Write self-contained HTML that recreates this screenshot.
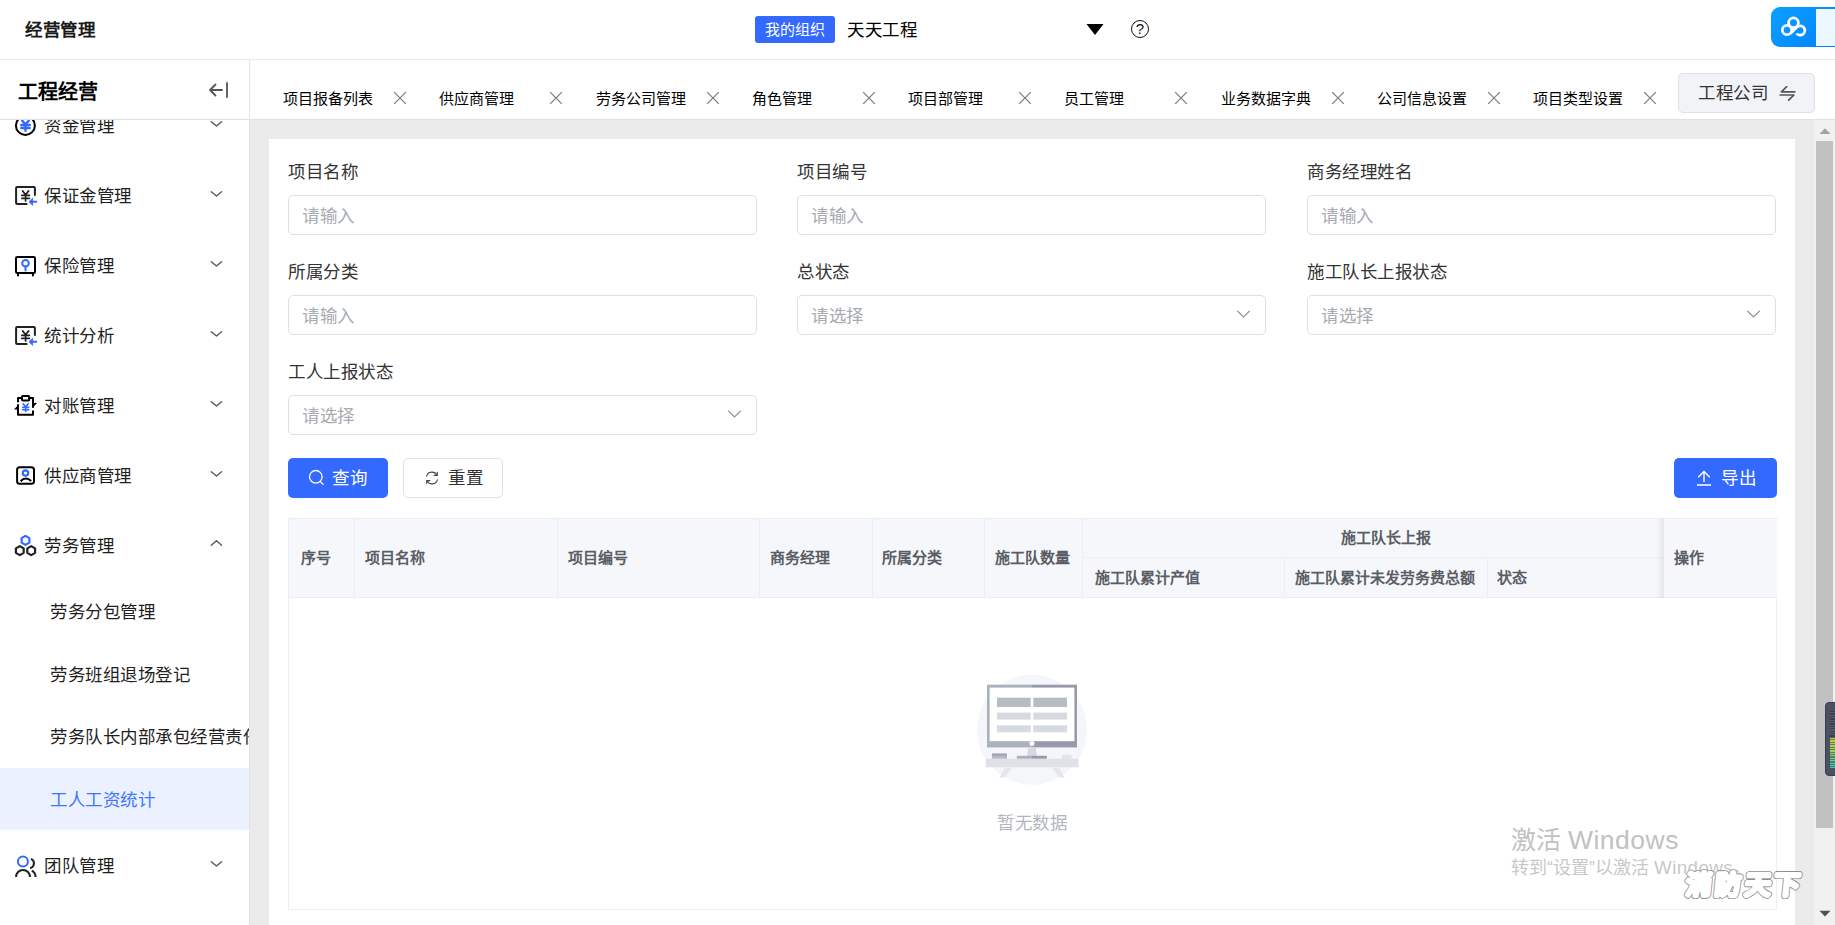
<!DOCTYPE html>
<html lang="zh-CN">
<head>
<meta charset="utf-8">
<title>工人工资统计</title>
<style>
*{box-sizing:border-box;margin:0;padding:0}
html,body{width:1835px;height:925px;overflow:hidden;background:#fff}
body{font-family:"Liberation Sans",sans-serif;color:#1f1f1f;position:relative;font-size:17.5px;letter-spacing:0.5px}
.tab,.hc,.badge,#side .head .t{letter-spacing:0}
.abs{position:absolute}
/* header */
#hdr{position:absolute;left:0;top:0;width:1835px;height:60px;background:#fff;border-bottom:1px solid #ebebeb}
#hdr .title{position:absolute;left:25px;top:17px;font-size:17.5px;line-height:26px;font-weight:700;color:#1a1a1a}
#hdr .badge{letter-spacing:0;position:absolute;left:755px;top:16px;width:80px;height:27px;background:#3369ff;border-radius:3px;color:#fff;font-size:15px;line-height:27px;text-align:center}
#hdr .org{position:absolute;left:847px;top:17px;font-size:17.5px;line-height:26px;color:#000}
/* sidebar */
#side{position:absolute;left:0;top:60px;width:250px;height:865px;background:#fff;border-right:1px solid #e3e4ea;overflow:hidden}
#side .head{position:absolute;left:0;top:0;width:249px;height:60px;background:#fff;border-bottom:1px solid #dfe1e8;z-index:2}
#side .head .t{position:absolute;left:18px;top:17px;font-size:20px;line-height:30px;font-weight:700;color:#000}
.mi{position:absolute;left:0;width:249px;height:70px}
.mi .tx{position:absolute;left:44px;top:23px;line-height:26px;font-size:17.5px;color:#1f1f1f}
.mi svg.ic{position:absolute;left:12px;top:21px;width:28px;height:28px}
#side .head svg.col{position:absolute;left:208px;top:21px;width:22px;height:18px}
.mi svg.ch{position:absolute;left:209px;top:27px;width:14px;height:14px}
.si{position:absolute;left:0;width:249px;height:62.5px}
.si .tx{position:absolute;left:50px;top:19px;line-height:26px;font-size:17.5px;color:#1f1f1f;white-space:nowrap}
.si.on{background:#ecf1ff}
.si.on .tx{color:#3f74ff}
/* tabs */
#tabs{position:absolute;left:250px;top:60px;width:1585px;height:60px;background:#fff;border-bottom:1px solid #dfe1e8}
.tab{position:absolute;top:28px;font-size:15px;line-height:22px;color:#000;white-space:nowrap}
.tx-x{position:absolute;top:31px;width:14px;height:14px}
#corp{position:absolute;left:1428px;top:13px;width:137px;height:40px;background:#f2f3f7;border:1px solid #dfe1e8;border-radius:5px}
#corp .t{position:absolute;left:19px;top:6px;font-size:17.5px;line-height:26px;color:#333}
/* content */
#main{position:absolute;left:250px;top:120px;width:1564px;height:805px;background:#ebebeb}
#card{position:absolute;left:19px;top:19px;width:1526px;height:790px;background:#fff}
.lb{position:absolute;font-size:17.5px;line-height:26px;color:#333;white-space:nowrap}
.inp{position:absolute;width:469px;height:40px;border:1px solid #dcdfe6;border-radius:5px;background:#fff}
.inp .ph{position:absolute;left:13px;top:7px;font-size:17.5px;line-height:26px;color:#a8abb2}
.inp svg{position:absolute;right:14px;top:13px;width:14px;height:14px}
.btn{position:absolute;height:40px;border-radius:5px;font-size:17.5px;line-height:38px;white-space:nowrap}
.btn.p{background:#3369ff;color:#fff}
.btn.d{background:#fff;border:1px solid #dcdfe6;color:#333}
/* table */
#tbl{position:absolute;left:19px;top:379px;width:1489px;height:392px;border:1px solid #ebeef5;background:#fff}
#th{position:absolute;left:0;top:0;width:1487px;height:79px;background:#f5f7fa;border-bottom:1px solid #ebeef5}
.vl{position:absolute;width:1px;background:#ebeef5}
.hl{position:absolute;height:1px;background:#ebeef5}
.hc{position:absolute;font-size:15px;line-height:22px;font-weight:700;color:#595d66;white-space:nowrap}
/* scrollbar */
#sb{position:absolute;left:1814px;top:120px;width:21px;height:805px;background:#f1f1f1}
#sb .thumb{position:absolute;left:2px;top:21px;width:17px;height:687px;background:#c1c1c1}
</style>
</head>
<body>
<div id="hdr">
  <div class="title">经营管理</div>
  <div class="badge">我的组织</div>
  <div class="org">天天工程</div>
  <svg style="position:absolute;left:1085px;top:22px;width:20px;height:15px" viewBox="0 0 20 15"><path d="M1.5 2 H18.5 L10 13 Z" fill="#000"/></svg>
  <div style="position:absolute;left:1131px;top:20.2px;width:18px;height:18px;border:1.3px solid #111;border-radius:50%;font-size:15px;line-height:15px;letter-spacing:0;text-align:center;color:#111">?</div>
  <div style="position:absolute;left:1771px;top:7px;width:70px;height:40px;border-radius:9px 0 0 9px;background:linear-gradient(135deg,#0aa0ff,#0080ff)">
    <div style="position:absolute;left:45px;top:1.5px;width:25px;height:37px;background:#edf7ff"></div>
    <svg style="position:absolute;left:6px;top:6px;width:34px;height:28px" viewBox="0 0 34 28"><g fill="none" stroke="#fff" stroke-width="2.7"><circle cx="16.5" cy="9.8" r="4.9"/><circle cx="10" cy="17" r="4.7"/><path d="M13.5 20.5 L20 14 A4.7 4.7 0 1 1 19.5 20.5"/></g></svg>
  </div>
</div>
<div id="side">
  <div class="head"><div class="t">工程经营</div><svg class="col" viewBox="0 0 22 18"><path d="M2 9 H14 M7.5 3.5 L2 9 L7.5 14.5 M19 2 V16" fill="none" stroke="#555" stroke-width="1.8" stroke-linecap="round" stroke-linejoin="round"/></svg></div>
  <div class="mi" style="top:30px"><svg class="ic" viewBox="0 0 28 28"><circle cx="13.4" cy="14.4" r="9.5" fill="none" stroke="#000" stroke-width="2"/><path d="M10.100000000000001 9.4 L13.5 13.420000000000002 L16.9 9.4 M13.5 13.420000000000002 V19.8 M9.3 13.97 H17.7 M9.3 17.05 H17.7" fill="none" stroke="#3369ff" stroke-width="2.4" stroke-linecap="round" stroke-linejoin="round"/></svg><div class="tx">资金管理</div><svg class="ch" viewBox="0 0 14 14"><path d="M2.3 4.7 L7.45 9.1 L12.6 4.7" fill="none" stroke="#555" stroke-width="1.3" stroke-linecap="round" stroke-linejoin="round"/></svg></div>
  <div class="mi" style="top:100px"><svg class="ic" viewBox="0 0 28 28"><path d="M22.9 14 V7 Q22.9 6 21.9 6 H5.1 Q4.1 6 4.1 7 V22 Q4.1 23 5.1 23 H14.6" fill="none" stroke="#1f2125" stroke-width="2" stroke-linecap="round"/><path d="M10.6 9.9 L13.6 13.7 L16.6 9.9 M13.6 13.7 V20 M9.8 14.3 H17.4 M9.8 17.3 H17.4" fill="none" stroke="#1f2125" stroke-width="1.7" stroke-linecap="round" stroke-linejoin="round"/><path d="M17 20.75 L20.6 17.2 V24.3 Z" fill="#3369ff" stroke="#3369ff" stroke-width="0.8" stroke-linejoin="round"/><path d="M20 20.75 H24.3" stroke="#3369ff" stroke-width="2" stroke-linecap="round"/></svg><div class="tx">保证金管理</div><svg class="ch" viewBox="0 0 14 14"><path d="M2.3 4.7 L7.45 9.1 L12.6 4.7" fill="none" stroke="#555" stroke-width="1.3" stroke-linecap="round" stroke-linejoin="round"/></svg></div>
  <div class="mi" style="top:170px"><svg class="ic" viewBox="0 0 28 28"><rect x="4" y="6" width="19" height="16" rx="1.2" fill="none" stroke="#000" stroke-width="2"/><path d="M6 22 V24.6 M20.9 22 V24.6" stroke="#000" stroke-width="2" stroke-linecap="round"/><circle cx="13.5" cy="12.3" r="3.3" fill="none" stroke="#3369ff" stroke-width="2"/><path d="M13.5 15.6 V19.6" stroke="#3369ff" stroke-width="2" stroke-linecap="round"/></svg><div class="tx">保险管理</div><svg class="ch" viewBox="0 0 14 14"><path d="M2.3 4.7 L7.45 9.1 L12.6 4.7" fill="none" stroke="#555" stroke-width="1.3" stroke-linecap="round" stroke-linejoin="round"/></svg></div>
  <div class="mi" style="top:240px"><svg class="ic" viewBox="0 0 28 28"><path d="M22.9 14 V7 Q22.9 6 21.9 6 H5.1 Q4.1 6 4.1 7 V22 Q4.1 23 5.1 23 H14.6" fill="none" stroke="#1f2125" stroke-width="2" stroke-linecap="round"/><path d="M10.6 9.9 L13.6 13.7 L16.6 9.9 M13.6 13.7 V20 M9.8 14.3 H17.4 M9.8 17.3 H17.4" fill="none" stroke="#1f2125" stroke-width="1.7" stroke-linecap="round" stroke-linejoin="round"/><path d="M17 20.75 L20.6 17.2 V24.3 Z" fill="#3369ff" stroke="#3369ff" stroke-width="0.8" stroke-linejoin="round"/><path d="M20 20.75 H24.3" stroke="#3369ff" stroke-width="2" stroke-linecap="round"/></svg><div class="tx">统计分析</div><svg class="ch" viewBox="0 0 14 14"><path d="M2.3 4.7 L7.45 9.1 L12.6 4.7" fill="none" stroke="#555" stroke-width="1.3" stroke-linecap="round" stroke-linejoin="round"/></svg></div>
  <div class="mi" style="top:310px"><svg class="ic" viewBox="0 0 28 28"><rect x="10" y="5" width="7.2" height="4.6" rx="0.8" fill="none" stroke="#000" stroke-width="2"/><path d="M10 7 H6 V10.6 M6 14 V23.8 H21 V20.2 M17 7 H21 V16" fill="none" stroke="#000" stroke-width="2" stroke-linecap="round" stroke-linejoin="round"/><path d="M2 18.6 L6.6 13.6 V18.6 Z M25 12 H20.4 V17 Z" fill="#000"/><path d="M11.2 12.8 L13.7 16 L16.2 12.8 M13.7 16 V20.4 M10.6 16.3 H16.8 M10.6 18.6 H16.8" fill="none" stroke="#3369ff" stroke-width="1.6" stroke-linecap="round" stroke-linejoin="round"/></svg><div class="tx">对账管理</div><svg class="ch" viewBox="0 0 14 14"><path d="M2.3 4.7 L7.45 9.1 L12.6 4.7" fill="none" stroke="#555" stroke-width="1.3" stroke-linecap="round" stroke-linejoin="round"/></svg></div>
  <div class="mi" style="top:380px"><svg class="ic" viewBox="0 0 28 28"><rect x="5.1" y="6.2" width="16.9" height="16.6" rx="2.6" fill="none" stroke="#000" stroke-width="2"/><circle cx="13.5" cy="12" r="2.7" fill="none" stroke="#3369ff" stroke-width="2.2"/><path d="M8.6 20.3 Q13.5 15 19.2 19.9" fill="none" stroke="#000" stroke-width="2"/></svg><div class="tx">供应商管理</div><svg class="ch" viewBox="0 0 14 14"><path d="M2.3 4.7 L7.45 9.1 L12.6 4.7" fill="none" stroke="#555" stroke-width="1.3" stroke-linecap="round" stroke-linejoin="round"/></svg></div>
  <div class="mi" style="top:450px"><svg class="ic" viewBox="0 0 28 28"><polygon points="13.50,4.90 17.40,7.15 17.40,11.65 13.50,13.90 9.60,11.65 9.60,7.15" fill="none" stroke="#3369ff" stroke-width="2.2" stroke-linejoin="round"/><polygon points="7.80,15.10 11.70,17.35 11.70,21.85 7.80,24.10 3.90,21.85 3.90,17.35" fill="none" stroke="#1f2125" stroke-width="2.2" stroke-linejoin="round"/><polygon points="19.20,15.10 23.10,17.35 23.10,21.85 19.20,24.10 15.30,21.85 15.30,17.35" fill="none" stroke="#1f2125" stroke-width="2.2" stroke-linejoin="round"/></svg><div class="tx">劳务管理</div><svg class="ch" viewBox="0 0 14 14"><path d="M2.3 8.3 L7.45 3.8 L12.6 8.3" fill="none" stroke="#555" stroke-width="1.3" stroke-linecap="round" stroke-linejoin="round"/></svg></div>
  <div class="mi" style="top:770px"><svg class="ic" viewBox="0 0 28 28"><circle cx="10.9" cy="10.5" r="5" fill="none" stroke="#3369ff" stroke-width="2"/><path d="M4 26 A7 7 0 0 1 18 26 M19 7.8 A5 5 0 0 1 18.2 17.2 M19.8 19.6 A7.5 7.5 0 0 1 23.6 26" fill="none" stroke="#1f2125" stroke-width="2"/></svg><div class="tx">团队管理</div><svg class="ch" viewBox="0 0 14 14"><path d="M2.3 4.7 L7.45 9.1 L12.6 4.7" fill="none" stroke="#555" stroke-width="1.3" stroke-linecap="round" stroke-linejoin="round"/></svg></div>
  <div class="si" style="top:520px"><div class="tx">劳务分包管理</div></div>
  <div class="si" style="top:582.5px"><div class="tx">劳务班组退场登记</div></div>
  <div class="si" style="top:645px"><div class="tx">劳务队长内部承包经营责任制</div></div>
  <div class="si on" style="top:707.5px"><div class="tx">工人工资统计</div></div>
</div>
<div id="tabs">
<div class="tab" style="left:33.0px">项目报备列表</div><svg class="tx-x" style="left:143.0px" viewBox="0 0 14 14"><path d="M1.2 1.2 L12.8 12.8 M12.8 1.2 L1.2 12.8" stroke="#7a7a7a" stroke-width="1.2" fill="none"/></svg>
<div class="tab" style="left:189.25px">供应商管理</div><svg class="tx-x" style="left:299.25px" viewBox="0 0 14 14"><path d="M1.2 1.2 L12.8 12.8 M12.8 1.2 L1.2 12.8" stroke="#7a7a7a" stroke-width="1.2" fill="none"/></svg>
<div class="tab" style="left:345.5px">劳务公司管理</div><svg class="tx-x" style="left:455.5px" viewBox="0 0 14 14"><path d="M1.2 1.2 L12.8 12.8 M12.8 1.2 L1.2 12.8" stroke="#7a7a7a" stroke-width="1.2" fill="none"/></svg>
<div class="tab" style="left:501.75px">角色管理</div><svg class="tx-x" style="left:611.75px" viewBox="0 0 14 14"><path d="M1.2 1.2 L12.8 12.8 M12.8 1.2 L1.2 12.8" stroke="#7a7a7a" stroke-width="1.2" fill="none"/></svg>
<div class="tab" style="left:658.0px">项目部管理</div><svg class="tx-x" style="left:768.0px" viewBox="0 0 14 14"><path d="M1.2 1.2 L12.8 12.8 M12.8 1.2 L1.2 12.8" stroke="#7a7a7a" stroke-width="1.2" fill="none"/></svg>
<div class="tab" style="left:814.25px">员工管理</div><svg class="tx-x" style="left:924.25px" viewBox="0 0 14 14"><path d="M1.2 1.2 L12.8 12.8 M12.8 1.2 L1.2 12.8" stroke="#7a7a7a" stroke-width="1.2" fill="none"/></svg>
<div class="tab" style="left:970.5px">业务数据字典</div><svg class="tx-x" style="left:1080.5px" viewBox="0 0 14 14"><path d="M1.2 1.2 L12.8 12.8 M12.8 1.2 L1.2 12.8" stroke="#7a7a7a" stroke-width="1.2" fill="none"/></svg>
<div class="tab" style="left:1126.75px">公司信息设置</div><svg class="tx-x" style="left:1236.75px" viewBox="0 0 14 14"><path d="M1.2 1.2 L12.8 12.8 M12.8 1.2 L1.2 12.8" stroke="#7a7a7a" stroke-width="1.2" fill="none"/></svg>
<div class="tab" style="left:1283.0px">项目类型设置</div><svg class="tx-x" style="left:1393.0px" viewBox="0 0 14 14"><path d="M1.2 1.2 L12.8 12.8 M12.8 1.2 L1.2 12.8" stroke="#7a7a7a" stroke-width="1.2" fill="none"/></svg>
<div id="corp"><div class="t">工程公司</div><svg viewBox="0 0 20 16" style="position:absolute;left:98px;top:12px;width:20px;height:16px"><path d="M9.6 0.7 L4.4 5.8 H17.8 M3.2 9 H16.9 L11.7 14.2" fill="none" stroke="#555" stroke-width="1.7" stroke-linejoin="round" stroke-linecap="round"/></svg></div>
</div>
<div id="main"><div id="card">
<div class="lb" style="left:19px;top:20px">项目名称</div>
<div class="lb" style="left:528px;top:20px">项目编号</div>
<div class="lb" style="left:1038px;top:20px">商务经理姓名</div>
<div class="inp" style="left:19px;top:56px"><div class="ph">请输入</div></div>
<div class="inp" style="left:528px;top:56px"><div class="ph">请输入</div></div>
<div class="inp" style="left:1038px;top:56px"><div class="ph">请输入</div></div>
<div class="lb" style="left:19px;top:120px">所属分类</div>
<div class="lb" style="left:528px;top:120px">总状态</div>
<div class="lb" style="left:1038px;top:120px">施工队长上报状态</div>
<div class="inp" style="left:19px;top:156px"><div class="ph">请输入</div></div>
<div class="inp" style="left:528px;top:156px"><div class="ph">请选择</div><svg viewBox="0 0 14 14"><path d="M0.5 2.1 L6.5 7.9 L12.5 2.1" fill="none" stroke="#8e8e8e" stroke-width="1.3" stroke-linecap="round" stroke-linejoin="round"/></svg></div>
<div class="inp" style="left:1038px;top:156px"><div class="ph">请选择</div><svg viewBox="0 0 14 14"><path d="M0.5 2.1 L6.5 7.9 L12.5 2.1" fill="none" stroke="#8e8e8e" stroke-width="1.3" stroke-linecap="round" stroke-linejoin="round"/></svg></div>
<div class="lb" style="left:19px;top:220px">工人上报状态</div>
<div class="inp" style="left:19px;top:256px"><div class="ph">请选择</div><svg viewBox="0 0 14 14"><path d="M0.5 2.1 L6.5 7.9 L12.5 2.1" fill="none" stroke="#8e8e8e" stroke-width="1.3" stroke-linecap="round" stroke-linejoin="round"/></svg></div>
<div class="btn p" style="left:19px;top:319px;width:100px"><svg style="position:absolute;left:19px;top:10px;width:20px;height:20px" viewBox="0 0 20 20"><circle cx="8.8" cy="8.8" r="6.3" fill="none" stroke="#fff" stroke-width="1.3"/><path d="M13.4 13.6 L16 16.2" stroke="#fff" stroke-width="1.3" stroke-linecap="round"/></svg><span style="position:absolute;left:44px;top:1px">查询</span></div>
<div class="btn d" style="left:134px;top:319px;width:100px"><svg style="position:absolute;left:19px;top:10px;width:18px;height:18px" viewBox="0 0 18 18"><g fill="none" stroke="#444" stroke-width="1.1" stroke-linecap="round" stroke-linejoin="round"><path d="M3.6 7.2 A5.6 5.6 0 0 1 14 6.2"/><path d="M14.4 10.8 A5.6 5.6 0 0 1 4 11.8"/><path d="M14.3 3.2 V6.4 H11.2"/><path d="M3.7 14.8 V11.6 H6.8"/></g></svg><span style="position:absolute;left:44px;top:0px">重置</span></div>
<div class="btn p" style="left:1405px;top:319px;width:103px"><svg style="position:absolute;left:21px;top:11px;width:18px;height:18px" viewBox="0 0 18 18"><path d="M9 2.6 V13 M3.2 8.2 L9 2.4 L14.8 8.2 M2 16 H16" fill="none" stroke="#fff" stroke-width="1.4" stroke-linejoin="miter"/></svg><span style="position:absolute;left:47px;top:1px">导出</span></div>
<div id="tbl"><div id="th"></div>
<div class="vl" style="left:65px;top:0px;height:79px"></div>
<div class="vl" style="left:268px;top:0px;height:79px"></div>
<div class="vl" style="left:470px;top:0px;height:79px"></div>
<div class="vl" style="left:583px;top:0px;height:79px"></div>
<div class="vl" style="left:695px;top:0px;height:79px"></div>
<div class="vl" style="left:793px;top:0px;height:79px"></div>
<div class="vl" style="left:995px;top:39px;height:40px"></div>
<div class="vl" style="left:1198px;top:39px;height:40px"></div>
<div class="hl" style="left:794px;top:38px;width:581px"></div>
<div class="hc" style="left:12px;top:28px">序号</div>
<div class="hc" style="left:76px;top:28px">项目名称</div>
<div class="hc" style="left:279px;top:28px">项目编号</div>
<div class="hc" style="left:481px;top:28px">商务经理</div>
<div class="hc" style="left:593px;top:28px">所属分类</div>
<div class="hc" style="left:706px;top:28px">施工队数量</div>
<div class="hc" style="left:1052px;top:7.5px">施工队长上报</div>
<div class="hc" style="left:806px;top:47.5px">施工队累计产值</div>
<div class="hc" style="left:1006px;top:47.5px">施工队累计未发劳务费总额</div>
<div class="hc" style="left:1208px;top:47.5px">状态</div>
<div style="position:absolute;left:1367px;top:0;width:8px;height:79px;background:linear-gradient(90deg,rgba(0,0,0,0),rgba(0,0,0,0.07))"></div>
<div style="position:absolute;left:1375px;top:0;width:113px;height:79px;background:#f5f7fa;border-bottom:1px solid #ebeef5"></div>
<div class="hc" style="left:1385px;top:28px">操作</div>
<svg style="position:absolute;left:683px;top:151px;width:120px;height:120px" viewBox="972 670 120 120">
<circle cx="1032" cy="729.7" r="55" fill="#f5f6f9"/>
<rect x="987" y="684.7" width="45" height="62.7" fill="#a9b1bc"/><rect x="1032" y="684.7" width="45" height="62.7" fill="#9799ad"/>
<rect x="989.6" y="687.6" width="84.8" height="53.6" fill="#fff"/>
<rect x="997" y="697.7" width="33.7" height="9.3" fill="#b7bbc2"/><rect x="1033.3" y="697.7" width="33.7" height="9.3" fill="#b7bbc2"/>
<rect x="997" y="712.6" width="33.7" height="7" fill="#d6dae1"/><rect x="1033.3" y="712.6" width="33.7" height="7" fill="#d6dae1"/>
<rect x="997" y="725.3" width="33.7" height="7" fill="#d6dae1"/><rect x="1033.3" y="725.3" width="33.7" height="7" fill="#d6dae1"/>
<circle cx="1032" cy="743.6" r="2.5" fill="#fff"/>
<path d="M1028.3 747.4 H1035.7 L1037.2 756.5 H1026.8 Z" fill="#d6d9e1"/>
<rect x="1016.8" y="755.8" width="15.2" height="3" fill="#a9b1bc"/><rect x="1032" y="755.8" width="14.8" height="3" fill="#9799ad"/>
<rect x="992" y="753.6" width="15" height="5.2" fill="#b4b9c5"/><rect x="992" y="753.6" width="15" height="2" fill="#9da3b3"/>
<rect x="1062" y="754.8" width="9.6" height="4" fill="#e3e5ea"/>
<rect x="985.8" y="758.8" width="92.8" height="8.5" fill="#dfe1e6"/>
<path d="M1005 767.3 H1012 L1005 777.5 H999.5 Z M1052 767.3 H1059 L1064.5 777.5 H1059 Z" fill="#e4e6eb"/>
</svg>
<div style="position:absolute;left:708px;top:291px;font-size:17.5px;line-height:26px;color:#b3b6be;white-space:nowrap">暂无数据</div></div>
<div style="position:absolute;left:1242px;top:684px;font-size:25px;line-height:34px;color:#c1c1c1;white-space:nowrap;letter-spacing:0">激活 <span style="font-size:26.5px;letter-spacing:0.5px">Windows</span></div>
<div style="position:absolute;left:1242px;top:715.5px;font-size:18px;line-height:26px;color:#c8c8c8;white-space:nowrap;letter-spacing:0">转到“设置”以激活 <span style="font-size:18.8px;letter-spacing:0.4px">Windows</span>。</div>
</div></div>
<div id="sb"><div class="thumb"></div>
<svg style="position:absolute;left:5px;top:7px;width:12px;height:8px" viewBox="0 0 12 8"><path d="M0.5 7 H11.5 L6 1.2 Z" fill="#a3a3a3"/></svg>
<svg style="position:absolute;left:5px;top:790px;width:12px;height:8px" viewBox="0 0 12 8"><path d="M0.5 0.8 H11.5 L6 6.6 Z" fill="#505050"/></svg>
</div>
<svg style="position:absolute;left:1676px;top:864px;width:134px;height:42px;overflow:visible" viewBox="0 0 134 42"><g font-family="Liberation Sans, sans-serif" font-size="26" font-weight="300" letter-spacing="3.6" stroke-linejoin="round" stroke-linecap="round" transform="skewX(-6)"><text x="12" y="30.5" fill="#8f8f8f" stroke="#8f8f8f" stroke-width="6.0">消防天下</text><text x="12" y="30.5" fill="#fff" stroke="#fff" stroke-width="4.3">消防天下</text></g></svg>
<div style="position:absolute;left:1825px;top:702px;width:14px;height:74px;border-radius:4px;background:#4b5161;border:1.5px solid #3a3f4c">
 <div style="position:absolute;left:4px;top:8px;width:8px;height:27px;background:repeating-linear-gradient(180deg,#3a3f4c 0,#3a3f4c 1.3px,#555b6b 1.3px,#555b6b 2.45px)"></div>
 <div style="position:absolute;left:4px;top:35px;width:8px;height:30px;background:repeating-linear-gradient(180deg,rgba(62,68,82,0) 0,rgba(62,68,82,0) 1.3px,rgba(62,68,82,0.6) 1.3px,rgba(62,68,82,0.6) 2.45px),linear-gradient(180deg,#c9c94a,#8fd06a 50%,#3fc9b0)"></div>
</div>
</body>
</html>
